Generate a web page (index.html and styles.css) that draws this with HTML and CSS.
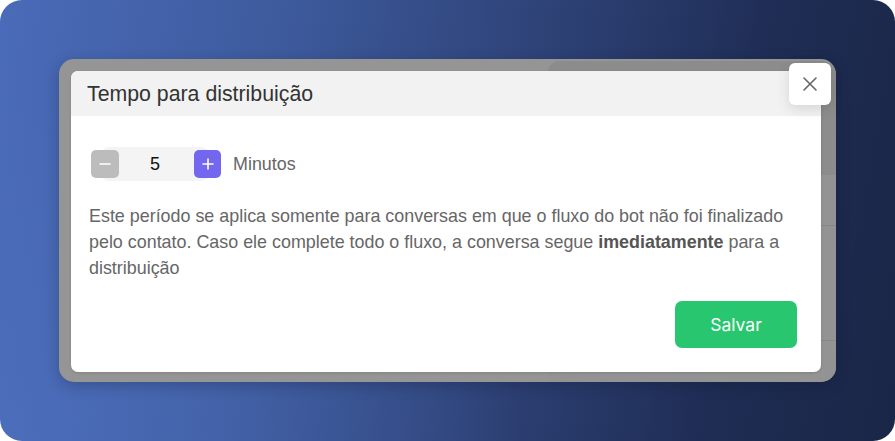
FILE: index.html
```html
<!DOCTYPE html>
<html lang="pt-BR">
<head>
<meta charset="utf-8">
<title>Tempo para distribuição</title>
<link rel="stylesheet" href="styles.css">
</head>
<body>
<div class="stage">
  <div class="frame">
    <div class="backdrop-panel">
      <div class="bp-top"></div>
      <div class="bp-line l1"></div>
      <div class="bp-line l2"></div>
    </div>
    <div class="modal">
      <div class="modal-header">
        <h2 class="modal-title">Tempo para distribuição</h2>
      </div>
      <div class="modal-body">
        <div class="stepper-row">
          <div class="stepper">
            <button class="step-btn minus" type="button">
              <svg width="12" height="12" viewBox="0 0 12 12"><path d="M1 6h10" stroke="#fff" stroke-width="1.6" stroke-linecap="round"/></svg>
            </button>
            <div class="step-value">5</div>
            <button class="step-btn plus" type="button">
              <svg width="12" height="12" viewBox="0 0 12 12"><path d="M1 6h10M6 1v10" stroke="#fff" stroke-width="1.6" stroke-linecap="round"/></svg>
            </button>
          </div>
          <span class="unit">Minutos</span>
        </div>
        <p class="desc">Este período se aplica somente para conversas em que o fluxo do bot não foi finalizado pelo contato. Caso ele complete todo o fluxo, a conversa segue <strong>imediatamente</strong> para a distribuição</p>
        <div class="actions">
          <button class="save-btn" type="button">Salvar</button>
        </div>
      </div>
    </div>
    <button class="close-btn" type="button" aria-label="Fechar">
      <svg width="16" height="16" viewBox="0 0 16 16"><path d="M2 2L14 14M14 2L2 14" stroke="#666" stroke-width="1.6" stroke-linecap="round"/></svg>
    </button>
  </div>
</div>
</body>
</html>
```

FILE: styles.css
```css
* { box-sizing: border-box; }
html, body { margin: 0; padding: 0; background: #fff; }
body { font-family: "Liberation Sans", Arial, sans-serif; }

.stage {
  width: 895px;
  height: 441px;
  border-radius: 22px;
  padding: 59px;
  background:
    radial-gradient(ellipse 520px 380px at 0% 100%, rgba(80,115,195,0.55), rgba(80,115,195,0) 100%),
    linear-gradient(100deg, #4a6bb9 0%, #3d5a9c 30%, #2c3f72 60%, #1f2d55 80%, #1a2646 100%);
  overflow: hidden;
}

.frame {
  position: relative;
  height: 100%;
  background: #959595;
  border-radius: 15px;
  padding: 12px 15px 10px 12px;
  box-shadow: 0 4px 14px rgba(10, 20, 40, 0.25);
}

.backdrop-panel {
  position: absolute;
  left: 489px;
  top: 2px;
  right: 0;
  bottom: 0;
  border-radius: 12px 15px 15px 0;
  background: #939393;
}
.bp-top {
  position: absolute;
  left: 0; right: 0; top: 0;
  height: 114px;
  border-radius: 12px 15px 0 0;
  background: #8c8c8c;
}
.bp-line {
  position: absolute;
  left: 0; right: 0;
  height: 1px;
  background: #888;
}
.bp-line.l1 { top: 164px; }
.bp-line.l2 { top: 279px; }

.modal {
  position: relative;
  height: 100%;
  background: #fff;
  border-radius: 7px;
  display: flex;
  flex-direction: column;
  box-shadow: 0 1px 3px rgba(0,0,0,0.12);
}

.modal-header {
  height: 45px;
  background: #f2f2f2;
  border-radius: 7px 7px 0 0;
  display: flex;
  align-items: center;
  padding-left: 16px;
}
.modal-title {
  margin: 0;
  font-family: "Liberation Sans", Arial, sans-serif;
  font-size: 21.3px;
  font-weight: 400;
  color: #333;
  padding-top: 1px;
}

.modal-body {
  padding: 31px 24px 24px 18px;
  display: flex;
  flex-direction: column;
}

.stepper-row {
  display: flex;
  align-items: center;
  gap: 12px;
  margin-left: 2px;
}
.stepper {
  display: flex;
  align-items: center;
}
.step-btn {
  position: relative;
  z-index: 1;
  width: 28px;
  height: 28px;
  border: 0;
  padding: 0;
  border-radius: 5px;
  display: flex;
  align-items: center;
  justify-content: center;
}
.step-btn.minus { background: #bcbcbc; }
.step-btn.plus { background: #7367f0; width: 27px; }
.step-value {
  width: 110px;
  height: 34px;
  margin: 0 -16px 0 -19px;
  background: #f4f4f4;
  border-radius: 9px;
  display: flex;
  align-items: center;
  justify-content: center;
  font-family: "Liberation Sans", Arial, sans-serif;
  font-size: 18px;
  color: #111;
}
.unit {
  font-family: "Liberation Sans", Arial, sans-serif;
  font-size: 17.9px;
  color: #666;
}

.desc {
  margin: 22px 0 0;
  font-family: "Liberation Sans", Arial, sans-serif;
  font-size: 17.9px;
  line-height: 26px;
  color: #666;
}
.desc strong { color: #555; font-weight: 700; }

.actions {
  display: flex;
  justify-content: flex-end;
  margin-top: 20px;
}
.save-btn {
  width: 122px;
  height: 47px;
  border: 0;
  border-radius: 7px;
  background: #28c76f;
  color: #fff;
  font-family: Inter, "Open Sans", sans-serif;
  font-size: 17.5px;
  font-weight: 400;
}

.close-btn {
  position: absolute;
  left: 730px;
  top: 4px;
  width: 42px;
  height: 42px;
  border: 0;
  padding: 0;
  border-radius: 6px;
  background: #fff;
  display: flex;
  align-items: center;
  justify-content: center;
  box-shadow: 0 4px 14px rgba(0,0,0,0.12);
  z-index: 2;
}
```
